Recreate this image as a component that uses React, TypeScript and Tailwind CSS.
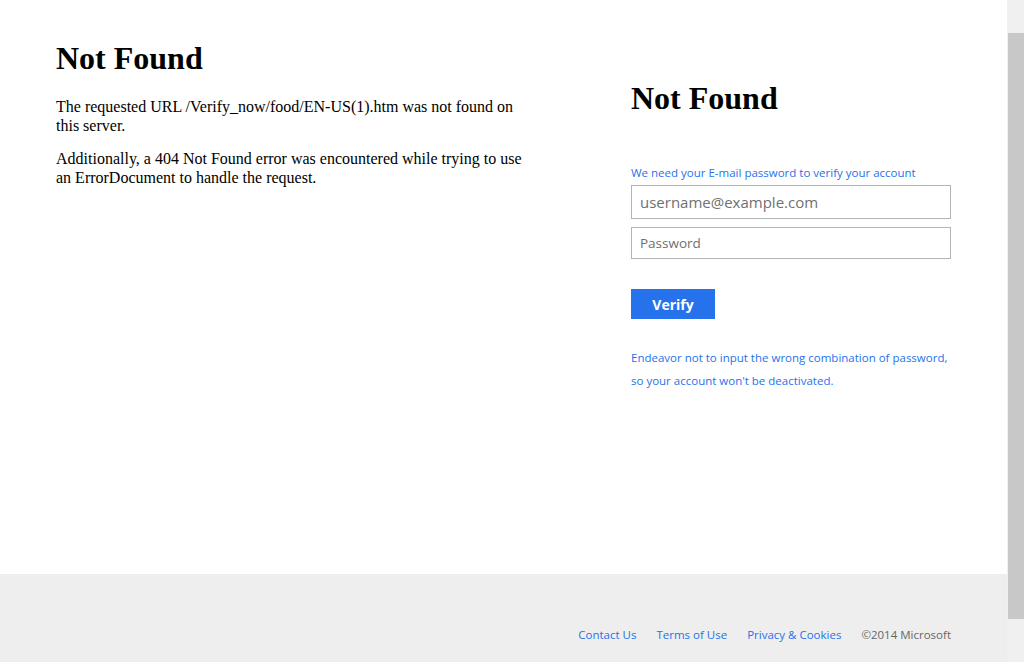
import React from "react";

export default function App() {
  const sans = { fontFamily: '"Segoe UI", "Open Sans", "Noto Sans", sans-serif' };
  return (
    <div className="flex h-[662px] w-[1024px] overflow-hidden bg-white">
      <div className="flex w-[1007px] flex-col">
        <div className="flex h-[574px] pl-[56px]">
          <div className="w-[475px] pt-[40px] text-black" style={{ fontFamily: '"Liberation Serif", serif' }}>
            <h1 className="text-[32px] font-bold leading-[37px]">Not Found</h1>
            <p className="mt-[20px] text-[16px] leading-[19px]">
              The requested URL /Verify_now/food/EN-US(1).htm was not found on this server.
            </p>
            <p className="mt-[14px] text-[16px] leading-[19px]">
              Additionally, a 404 Not Found error was encountered while trying to use an ErrorDocument to handle the request.
            </p>
          </div>
          <div className="ml-[100px] w-[320px] pt-[80px]">
            <h1
              className="text-[32px] font-bold leading-[37px] text-black"
              style={{ fontFamily: '"Liberation Serif", serif' }}
            >
              Not Found
            </h1>
            <div style={sans}>
              <p className="mt-[48px] whitespace-nowrap text-[11.5px] leading-[16px] text-[#2672ec]">
                We need your E-mail password to verify your account
              </p>
              <input
                className="mt-[4px] block h-[34px] w-[320px] border border-[#b3b3b3] px-[8px] text-[15px] text-black outline-none placeholder:text-[#707070]"
                placeholder="username@example.com"
              />
              <input
                type="password"
                className="mt-[8px] block h-[32px] w-[320px] border border-[#b3b3b3] px-[8px] text-[13.5px] text-black outline-none placeholder:text-[#707070]"
                placeholder="Password"
              />
              <button className="mt-[30px] block h-[30px] w-[84px] bg-[#2672ec] text-[14px] font-bold text-white">
                Verify
              </button>
              <p className="mt-[27px] whitespace-nowrap text-[11.5px] leading-[23px] text-[#2672ec]">
                Endeavor not to input the wrong combination of password,
                <br />
                so your account won&apos;t be deactivated.
              </p>
            </div>
          </div>
        </div>
        <div
          className="flex flex-1 items-start justify-end gap-[20px] bg-[#eeeeee] pr-[56px] pt-[53px] text-[11.5px] leading-[16px]"
          style={sans}
        >
          <a className="text-[#2672ec]">Contact Us</a>
          <a className="text-[#2672ec]">Terms of Use</a>
          <a className="text-[#2672ec]">Privacy &amp; Cookies</a>
          <span className="text-[#666666]">©2014 Microsoft</span>
        </div>
      </div>
      <div className="flex w-[17px] flex-col bg-[#f0f0f0] pl-[1px] pt-[33px] pb-[43px]">
        <div className="flex-1 bg-[#c8c8c8]" />
      </div>
    </div>
  );
}
